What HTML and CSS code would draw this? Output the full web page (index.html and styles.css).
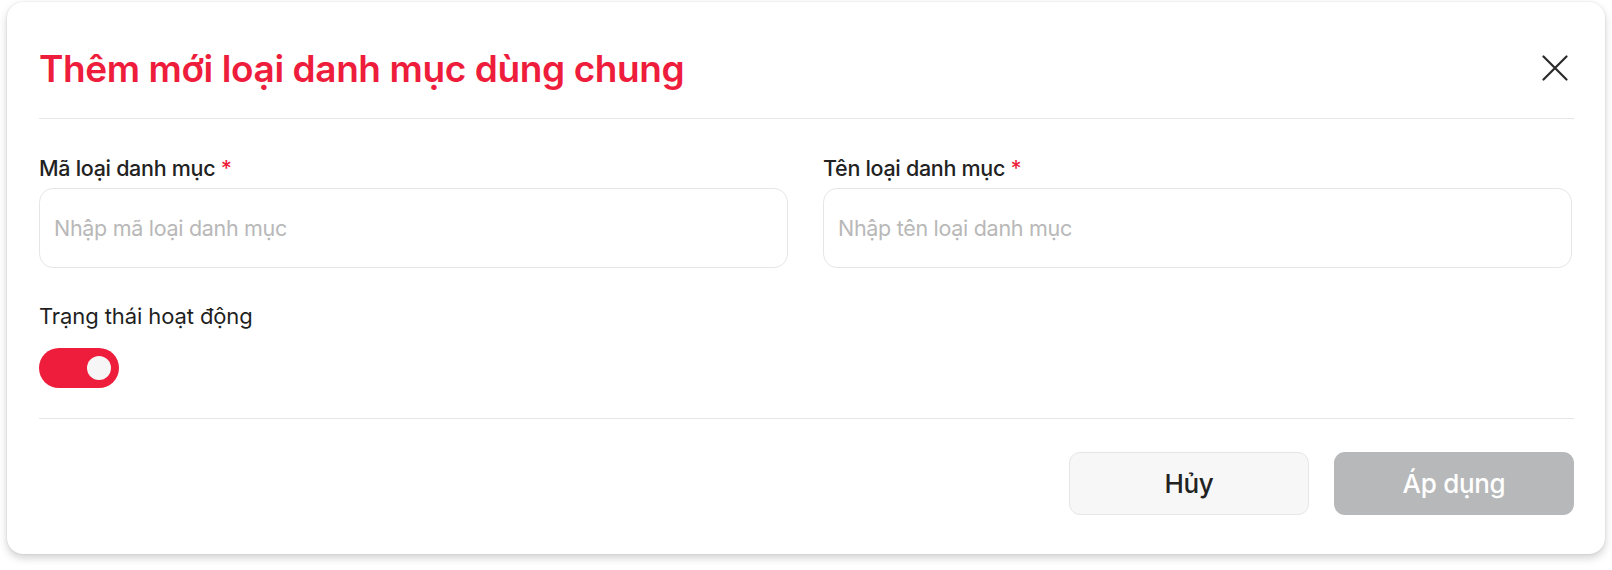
FILE: index.html
```html
<html>
<head>
    <meta name="viewport" content="width=device-width, initial-scale=1.0">
    <title>Thêm mới loại danh mục dùng chung</title>
    <link rel="stylesheet" href="styles.css">
</head>
<body>
<div class="modal">
    <div class="modal-header">
        <h1 class="modal-title">Thêm mới loại danh mục dùng chung</h1>
        <button class="close-btn" aria-label="Đóng">
            <svg width="26" height="26" viewBox="0 0 26 26" fill="none" stroke="#2a2a2a" stroke-width="2.2" stroke-linecap="round">
                <path d="M1.5 1.5 L24.5 24.5 M24.5 1.5 L1.5 24.5"/>
            </svg>
        </button>
    </div>
    <div class="modal-body">
        <div class="form-row">
            <div class="field">
                <label class="field-label">Mã loại danh mục <span class="required">*</span></label>
                <input type="text" class="field-input" placeholder="Nhập mã loại danh mục">
            </div>
            <div class="field">
                <label class="field-label">Tên loại danh mục <span class="required">*</span></label>
                <input type="text" class="field-input" placeholder="Nhập tên loại danh mục">
            </div>
        </div>
        <div class="status">
            <label class="field-label light">Trạng thái hoạt động</label>
            <div class="switch on"><span class="knob"></span></div>
        </div>
    </div>
    <div class="modal-footer">
        <button class="btn btn-cancel">Hủy</button>
        <button class="btn btn-apply" disabled>Áp dụng</button>
    </div>
</div>
</body>
</html>
```

FILE: styles.css
```css
/* Page */
body {
    margin: 0;
    background: #fff;
    font-family: 'Inter', 'Noto Sans', sans-serif;
    color: #222;
}
/* Modal card */
.modal {
    margin: 2px 7px 0 7px;
    height: 552px;
    box-sizing: border-box;
    background: #fff;
    border-radius: 16px;
    box-shadow: 0 0 2px rgba(0, 0, 0, 0.12), 0 4px 8px rgba(0, 0, 0, 0.18);
    padding: 32px 31px 0 32px;
}
/* Header */
.modal-header {
    display: flex;
    align-items: center;
    justify-content: space-between;
    height: 68px;
    padding-bottom: 16px;
    border-bottom: 1px solid #e6e6e6;
}
.modal-title {
    margin: 0;
    font-size: 37px;
    font-weight: 600;
    letter-spacing: -0.4px;
    color: #ee1d3c;
}
.close-btn {
    background: none;
    border: none;
    padding: 0;
    margin-right: 6px;
    width: 26px;
    height: 26px;
    cursor: pointer;
}
/* Form body */
.modal-body {
    padding: 35px 0 30px 0;
    border-bottom: 1px solid #e6e6e6;
}
.form-row {
    display: flex;
    gap: 35px;
    padding-right: 2px;
}
.field {
    flex: 1;
    display: flex;
    flex-direction: column;
    gap: 6px;
}
.field-label {
    font-size: 21.5px;
    line-height: 28px;
    font-weight: 500;
    color: #222;
    letter-spacing: -0.3px;
}
.field-label.light {
    font-size: 22px;
    font-weight: 400;
    letter-spacing: -0.1px;
    color: #1f1f1f;
}
.required {
    color: #ee1d3c;
}
.field-input {
    height: 80px;
    box-sizing: border-box;
    border: 1.5px solid #e6e6e6;
    border-radius: 14px;
    padding: 0 14px;
    font-family: inherit;
    font-size: 21.5px;
    color: #222;
    outline: none;
}
.field-input::placeholder {
    color: #b8b8b8;
    letter-spacing: -0.3px;
}
/* Status toggle */
.status {
    margin-top: 34px;
    display: flex;
    flex-direction: column;
    gap: 18px;
}
.switch {
    width: 80px;
    height: 40px;
    border-radius: 20px;
    background: #ccc;
    display: flex;
    align-items: center;
    padding: 0 8px;
    box-sizing: border-box;
}
.switch.on {
    background: #ee1d3c;
    justify-content: flex-end;
}
.knob {
    width: 24px;
    height: 24px;
    border-radius: 50%;
    background: #f6f6f6;
}
/* Footer buttons */
.modal-footer {
    display: flex;
    justify-content: flex-end;
    gap: 25px;
    padding-top: 33px;
}
.btn {
    width: 240px;
    height: 63px;
    border-radius: 11px;
    font-family: inherit;
    font-size: 26px;
    font-weight: 500;
    letter-spacing: -0.3px;
    cursor: pointer;
}
.btn-cancel {
    background: #f7f7f7;
    border: 1.5px solid #e6e6e6;
    color: #222;
}
.btn-apply {
    background: #b7b8ba;
    border: none;
    color: #fff;
}
```
